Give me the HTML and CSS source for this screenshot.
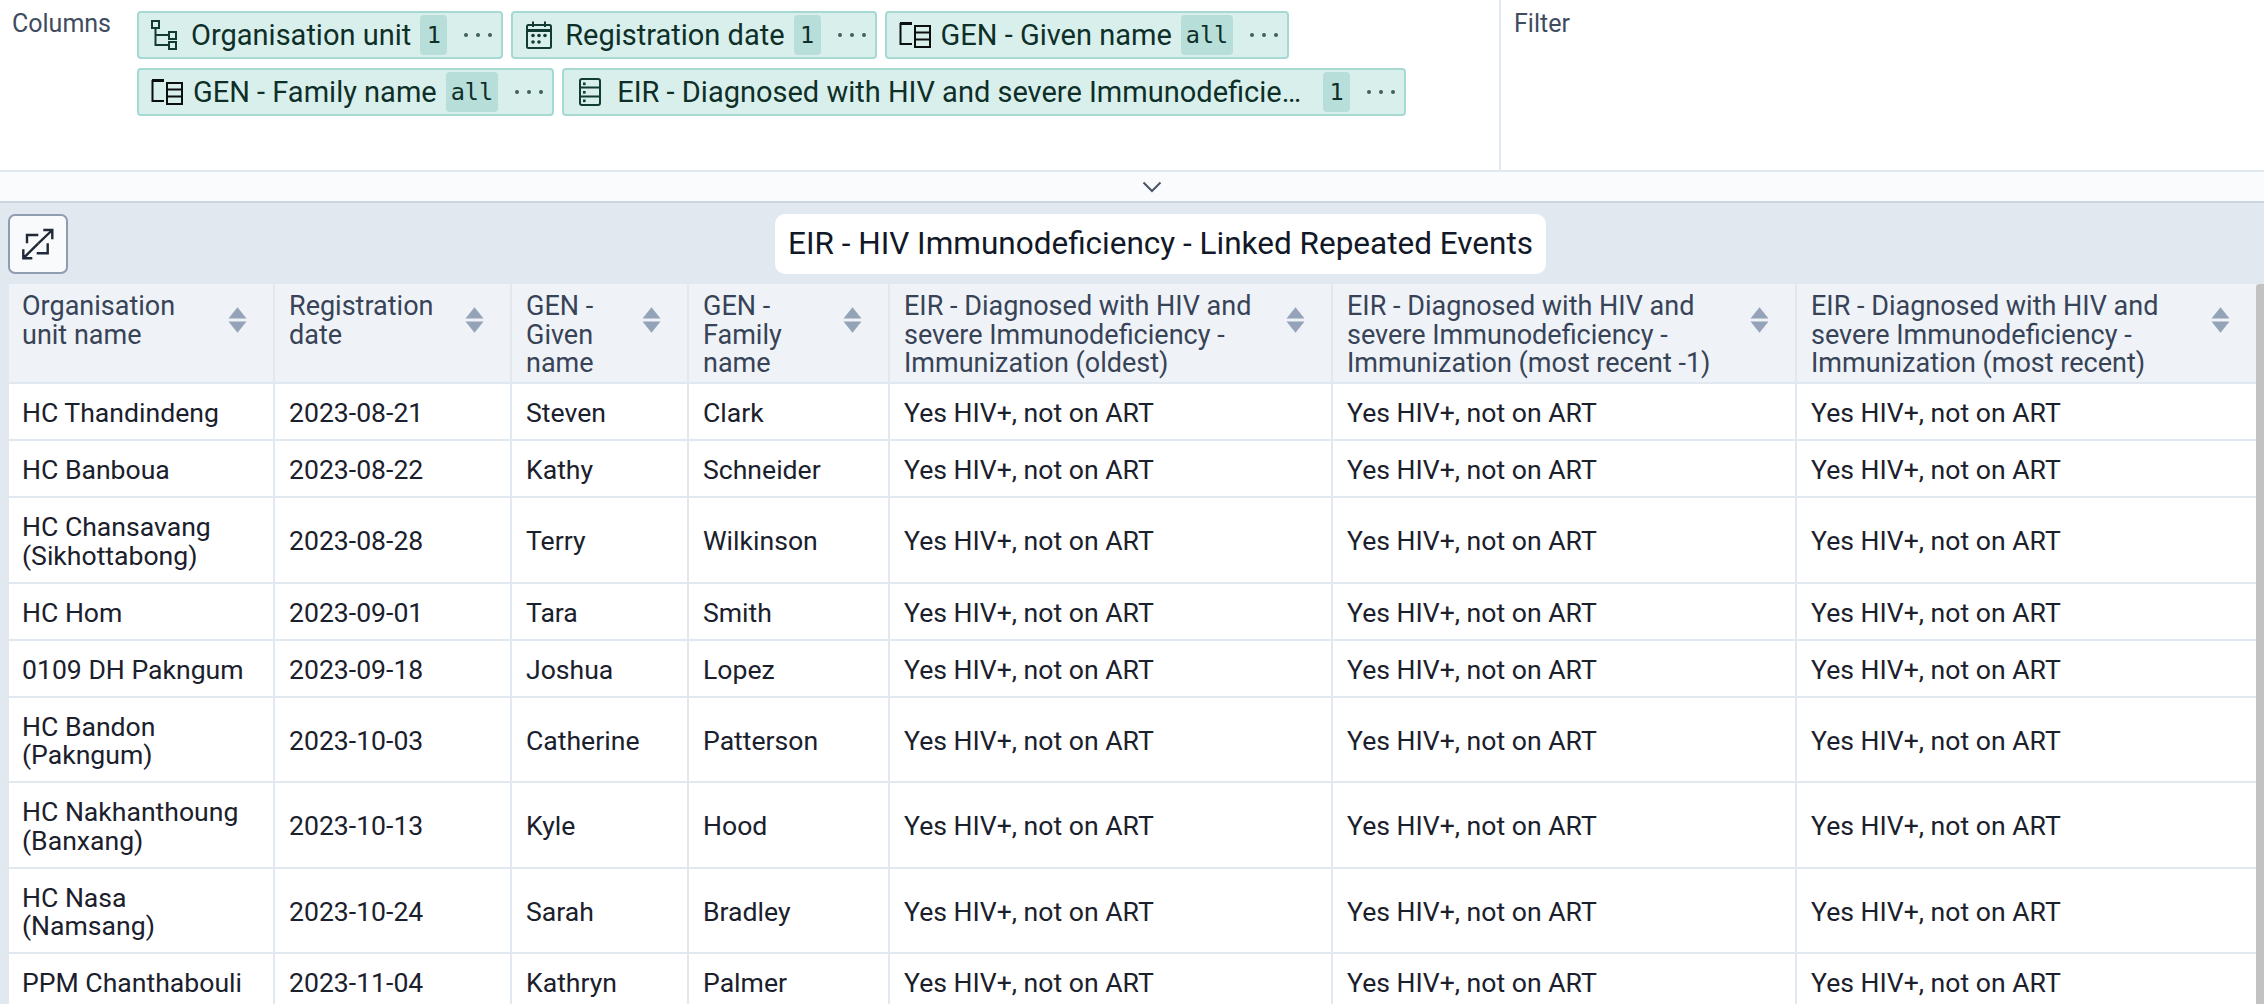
FILE: index.html
```html
<!DOCTYPE html>
<html lang="en">
<head>
    <meta charset="UTF-8">
    <title>Line list</title>
    <link rel="stylesheet" href="styles.css">
</head>
<body>
    <!-- Layout panel -->
    <div class="layout">
        <div class="columns-area">
            <div class="axis-label">Columns</div>
            <div class="chips">
                <div class="chip">
                    <svg class="chip-icon" width="28" height="30" viewBox="0 0 28 30" fill="none" stroke="#123b33" stroke-width="2">
                        <rect x="1" y="1" width="7" height="7"/>
                        <path d="M4.500 8V25H18M4.500 15H18"/>
                        <rect x="18" y="12" width="7" height="7"/>
                        <rect x="18" y="22" width="7" height="7"/>
                    </svg>
                    <span class="chip-name">Organisation unit</span>
                    <span class="chip-count">1</span>
                    <span class="chip-more"><i></i><i></i><i></i></span>
                </div>
                <div class="chip">
                    <svg class="chip-icon" width="28" height="28" viewBox="-1 0 28 28" fill="none" stroke="#123b33" stroke-width="2">
                        <rect x="1" y="4" width="24" height="23" rx="1.500"/>
                        <path d="M1 9.500H25" stroke-width="3"/>
                        <path d="M7 0.500V6M19 0.500V6"/>
                        <g fill="#123b33" stroke="none">
                            <circle cx="7" cy="14.500" r="1.800"/><circle cx="13" cy="14.500" r="1.800"/><circle cx="19" cy="14.500" r="1.800"/>
                            <circle cx="7" cy="21" r="1.800"/><circle cx="13" cy="21" r="1.800"/>
                        </g>
                    </svg>
                    <span class="chip-name">Registration date</span>
                    <span class="chip-count">1</span>
                    <span class="chip-more"><i></i><i></i><i></i></span>
                </div>
                <div class="chip">
                    <svg class="chip-icon chip-icon-gen" width="32" height="26" viewBox="0 0 32 26" fill="none" stroke="#0b0f0e" stroke-width="2">
                        <path d="M13 2H1.500V22H13"/>
                        <path d="M1 1.500H13" stroke-width="3"/>
                        <rect x="16" y="4" width="15" height="21"/>
                        <path d="M16 10.500H31M16 17.500H31"/>
                    </svg>
                    <span class="chip-name">GEN - Given name</span>
                    <span class="chip-count">all</span>
                    <span class="chip-more"><i></i><i></i><i></i></span>
                </div>
                <div class="chip">
                    <svg class="chip-icon chip-icon-gen" width="32" height="26" viewBox="0 0 32 26" fill="none" stroke="#0b0f0e" stroke-width="2">
                        <path d="M13 2H1.500V22H13"/>
                        <path d="M1 1.500H13" stroke-width="3"/>
                        <rect x="16" y="4" width="15" height="21"/>
                        <path d="M16 10.500H31M16 17.500H31"/>
                    </svg>
                    <span class="chip-name">GEN - Family name</span>
                    <span class="chip-count">all</span>
                    <span class="chip-more"><i></i><i></i><i></i></span>
                </div>
                <div class="chip">
                    <svg class="chip-icon" width="29" height="28" viewBox="-3 0 29 28" fill="none" stroke="#123b33" stroke-width="2">
                        <rect x="1" y="1" width="20" height="26" rx="2"/>
                        <path d="M1 9.500H21M1 18.500H21"/>
                        <g fill="#123b33" stroke="none">
                            <rect x="4" y="4.500" width="2.600" height="2.600"/>
                            <rect x="4" y="13" width="2.600" height="2.600"/>
                            <rect x="4" y="21.500" width="2.600" height="2.600"/>
                        </g>
                    </svg>
                    <span class="chip-name chip-name-long">EIR - Diagnosed with HIV and severe Immunodeficie…</span>
                    <span class="chip-count">1</span>
                    <span class="chip-more"><i></i><i></i><i></i></span>
                </div>
            </div>
        </div>
        <div class="filter-area">
            <div class="axis-label">Filter</div>
        </div>
    </div>

    <!-- Collapse bar -->
    <div class="collapse-bar">
        <svg width="20" height="12" viewBox="0 0 20 12" fill="none" stroke="#4a5568" stroke-width="2">
            <path d="M1.500 1.500L10 10L18.500 1.500"/>
        </svg>
    </div>

    <!-- Visualization -->
    <div class="vis">
        <div class="vis-head">
            <button class="expand-btn" type="button">
                <svg width="32" height="32" viewBox="0 0 32 32" fill="none" stroke="#1f2937" stroke-width="2.400">
                    <path d="M5 15.300V7H16.300"/>
                    <path d="M25.700 15.300V25.300H14.700"/>
                    <path d="M16.300 15.300L30.300 2M21.300 2H30.300V11.300"/>
                    <path d="M16.300 15.300L1.300 30.300M1.300 21.300V30.300H10.300"/>
                </svg>
            </button>
            <div class="vis-title-wrap">
                <div class="vis-title">EIR - HIV Immunodeficiency - Linked Repeated Events</div>
            </div>
        </div>
        <div class="table-wrap">
            <table class="linelist">
                <colgroup>
                    <col class="c1"><col class="c2"><col class="c3"><col class="c4"><col class="c5"><col class="c6"><col class="c7">
                </colgroup>
                <thead id="table-head"></thead>
                <tbody id="table-body"></tbody>
            </table>
            <div class="scrollbar"></div>
        </div>
    </div>

    <script src="table.js"></script>
</body>
</html>
```

FILE: table.js
```js
const encabezados = [
    'Organisation unit name',
    'Registration date',
    'GEN - Given name',
    'GEN - Family name',
    'EIR - Diagnosed with HIV and severe Immunodeficiency - Immunization (oldest)',
    'EIR - Diagnosed with HIV and severe Immunodeficiency - Immunization (most recent -1)',
    'EIR - Diagnosed with HIV and severe Immunodeficiency - Immunization (most recent)'
];

const filas = [
    ['HC Thandindeng', '2023-08-21', 'Steven', 'Clark'],
    ['HC Banboua', '2023-08-22', 'Kathy', 'Schneider'],
    ['HC Chansavang (Sikhottabong)', '2023-08-28', 'Terry', 'Wilkinson'],
    ['HC Hom', '2023-09-01', 'Tara', 'Smith'],
    ['0109 DH Pakngum', '2023-09-18', 'Joshua', 'Lopez'],
    ['HC Bandon<br>(Pakngum)', '2023-10-03', 'Catherine', 'Patterson'],
    ['HC Nakhanthoung (Banxang)', '2023-10-13', 'Kyle', 'Hood'],
    ['HC Nasa<br>(Namsang)', '2023-10-24', 'Sarah', 'Bradley'],
    ['PPM Chanthabouli', '2023-11-04', 'Kathryn', 'Palmer']
];

const sortIcon = '<svg class="sort-icon" width="19" height="26" viewBox="0 0 20 27" fill="#94a3b8"><path d="M10 0L19.500 12H0.500Z"/><path d="M0.500 15H19.500L10 27Z"/></svg>';

const head = document.getElementById('table-head');
head.innerHTML = '<tr>' + encabezados.map(t =>
    `<th><div class="th-inner"><span>${t}</span>${sortIcon}</div></th>`
).join('') + '</tr>';

const body = document.getElementById('table-body');
body.innerHTML = filas.map(f => {
    const vacuna = 'Yes HIV+, not on ART';
    const celdas = f.concat([vacuna, vacuna, vacuna]);
    return '<tr>' + celdas.map(c => `<td>${c}</td>`).join('') + '</tr>';
}).join('');
```

FILE: styles.css
```css
/* General */
html, body {
    height: 100%;
}

body {
    margin: 0;
    overflow: hidden;
    font-family: Roboto, "Liberation Sans", sans-serif;
    background-color: #e2e8f0;
    color: #1a202c;
}

/* Layout panel */
.layout {
    display: flex;
    height: 170px;
    background-color: #fff;
}

.columns-area {
    display: flex;
    width: 1501px;
    box-sizing: border-box;
    border-right: 2px solid #e2e8f0;
}

.axis-label {
    width: 137px;
    flex: none;
    padding: 10px 0 0 12px;
    box-sizing: border-box;
    font-size: 25px;
    line-height: 28px;
    color: #404b5f;
}

.filter-area {
    flex: 1;
    padding-left: 13px;
}

.filter-area .axis-label {
    padding-left: 0;
}

.chips {
    display: flex;
    flex-wrap: wrap;
    align-content: flex-start;
    gap: 9px 8px;
    padding-top: 11px;
    flex: 1;
}

.chip {
    display: flex;
    align-items: center;
    height: 48px;
    box-sizing: border-box;
    padding: 0 9px 0 12px;
    background-color: #d9efec;
    border: 2px solid #a6d9d2;
    border-radius: 4px;
    font-size: 29px;
    color: #0d2f28;
}

.chip-icon {
    flex: none;
    margin-right: 12px;
}

.chip-icon-gen {
    margin-right: 10px;
}

.chip-name {
    white-space: nowrap;
}

.chip-name-long {
    margin-right: 13px;
}

.chip-count {
    margin-left: 9px;
    padding: 0 5px;
    height: 40px;
    line-height: 40px;
    min-width: 17px;
    text-align: center;
    background-color: #b8deda;
    border-radius: 4px;
    font-family: "DejaVu Sans Mono", monospace;
    font-size: 23.500px;
}

.chip-more {
    display: flex;
    gap: 8px;
    margin-left: 17px;
}

.chip-more i {
    width: 4px;
    height: 4px;
    border-radius: 50%;
    background-color: #42605b;
}

/* Collapse bar */
.collapse-bar {
    display: flex;
    align-items: center;
    justify-content: center;
    height: 33px;
    box-sizing: border-box;
    padding-left: 40px;
    background-color: #fafbfd;
    border-top: 2px solid #e2e8f0;
    border-bottom: 2px solid #cbd5e0;
}

/* Visualization */
.vis-head {
    display: flex;
    padding: 11px 0 10px 8px;
    height: 60px;
}

.expand-btn {
    display: flex;
    align-items: center;
    justify-content: center;
    width: 60px;
    height: 60px;
    padding: 0;
    box-sizing: border-box;
    background-color: #f8fafc;
    border: 2px solid #8f9db0;
    border-radius: 7px;
}

.vis-title-wrap {
    flex: 1;
    display: flex;
    justify-content: center;
    padding-right: 11px;
}

.vis-title {
    padding: 0 13px;
    line-height: 59px;
    background-color: #fff;
    border-radius: 10px;
    font-size: 31.500px;
    font-weight: 400;
    color: #111827;
}

/* Table */
.table-wrap {
    position: relative;
    padding-left: 9px;
}

.linelist {
    width: 2247px;
    table-layout: fixed;
    border-collapse: separate;
    border-spacing: 0;
    background-color: #fff;
}

.c1 { width: 266px; }
.c2 { width: 237px; }
.c3 { width: 177px; }
.c4 { width: 201px; }
.c5 { width: 443px; }
.c6 { width: 464px; }
.c7 { width: 459px; }

.linelist th {
    padding: 8px 26px 4.500px 14px;
    background-color: #eff2f6;
    border-right: 2px solid #e2e8f0;
    border-bottom: 2px solid #e2e8f0;
    font-size: 27px;
    font-weight: 400;
    line-height: 28.500px;
    text-align: left;
    vertical-align: top;
    color: #374357;
}

.th-inner {
    display: flex;
    justify-content: space-between;
    gap: 18px;
}

.sort-icon {
    flex: none;
    margin-top: 15px;
}

.linelist td {
    padding: 15px 14px 11.500px;
    border-right: 2px solid #e2e8f0;
    border-bottom: 2px solid #e2e8f0;
    font-size: 26.600px;
    line-height: 28.500px;
    color: #1a202c;
}

.linelist th:first-child, .linelist td:first-child {
    padding-left: 13px;
}

.linelist th:last-child, .linelist td:last-child {
    border-right: none;
}

.scrollbar {
    position: absolute;
    top: 0;
    right: 0;
    bottom: 0;
    width: 8px;
    background-color: #c2c2c2;
    border-radius: 4px 0 0 0;
}
```
